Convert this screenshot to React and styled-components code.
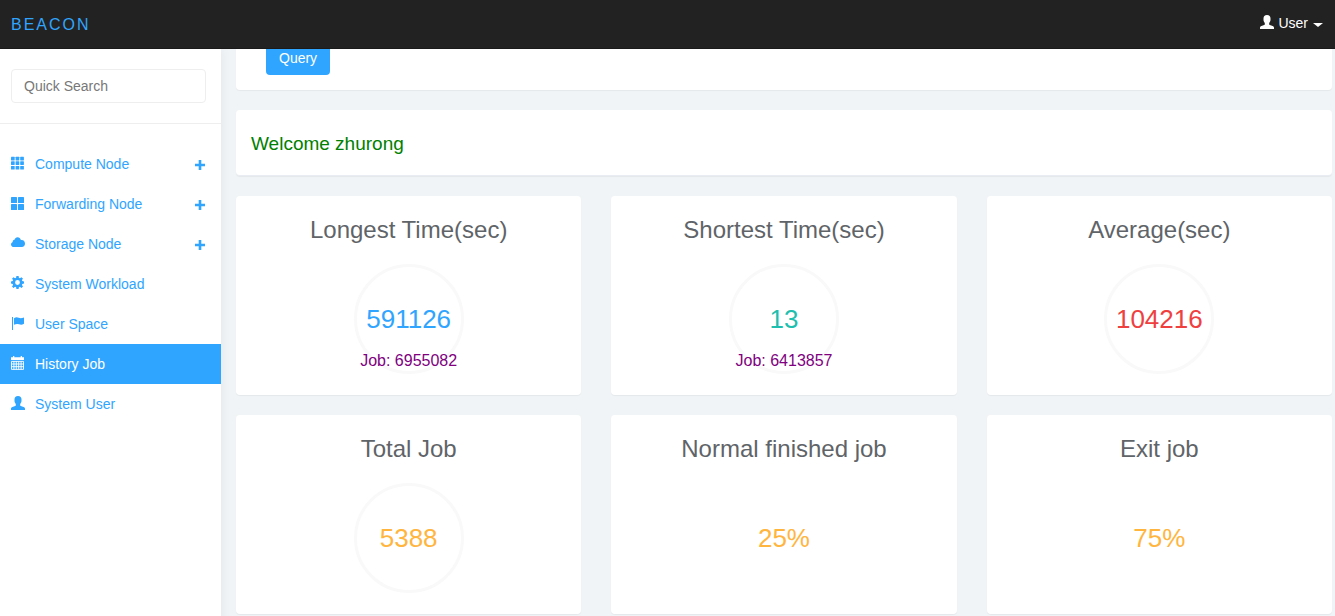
import React from "react";
import styled, { createGlobalStyle, css } from "styled-components";

const blue = "#30a5ff";

const GlobalStyle = createGlobalStyle`
  *, *::before, *::after { box-sizing: border-box; }
  html { overflow: hidden; }
  body {
    margin: 0;
    background: #f1f4f7;
    color: #5f6468;
    font: 14px/20px "Liberation Sans", Helvetica, Arial, sans-serif;
  }
`;

const Navbar = styled.header`
  position: sticky;
  top: 0;
  z-index: 10;
  display: flex;
  align-items: center;
  justify-content: space-between;
  height: 49px;
  padding: 0 12px 0 11px;
  background: #222;
  border-bottom: 1px solid #1a1a1a;
`;

const Brand = styled.a`
  padding-top: 2px;
  color: ${blue};
  font-size: 16px;
  letter-spacing: 2px;
  text-decoration: none;
`;

const UserButton = styled.button`
  display: flex;
  align-items: center;
  gap: 4px;
  padding: 0 0 2px;
  border: 0;
  background: none;
  color: #fff;
  font: inherit;
  font-size: 14px;
`;

const Caret = styled.span`
  margin: 4px 0 0 1px;
  border: 5px solid transparent;
  border-top: 4px solid currentColor;
  border-bottom: 0;
`;

const Layout = styled.div`
  display: flex;
  min-height: calc(100vh - 49px);
`;

const Sidebar = styled.aside`
  flex: 0 0 221px;
  background: #fff;
  box-shadow: 1px 0 10px rgba(0, 0, 0, 0.05);
`;

const SearchForm = styled.form`
  padding: 20px 15px 20px 11px;
  border-bottom: 1px solid #eee;
`;

const SearchInput = styled.input`
  display: block;
  width: 100%;
  height: 34px;
  padding: 6px 12px;
  border: 1px solid #eee;
  border-radius: 4px;
  background: #fff;
  font: inherit;
  font-size: 14px;
  color: #555;
  &::placeholder { color: #777; opacity: 1; }
`;

const Menu = styled.ul`
  margin: 20px 0 0;
  padding: 0;
  list-style: none;
`;

const MenuLink = styled.a`
  display: flex;
  align-items: center;
  gap: 10px;
  height: 40px;
  padding: 0 16px 0 11px;
  color: ${blue};
  font-size: 14px;
  text-decoration: none;
  ${(p) => p.$active && css`
    background: ${blue};
    color: #fff;
  `}
`;

const MenuLabel = styled.span`
  flex: 1;
`;

const Glyph = styled.svg`
  display: block;
  flex: none;
  width: 14px;
  height: 14px;
  margin-bottom: 2px;
  fill: currentColor;
`;

const Main = styled.main`
  flex: 1;
  min-width: 0;
  margin-top: -49px;
  padding: 0 3px 0 15px;
  overflow: hidden;
`;

const Panel = styled.section`
  margin-bottom: 20px;
  border-radius: 4px;
  background: #fff;
  box-shadow: 0 1px 1px rgba(0, 0, 0, 0.05);
`;

const QueryPanel = styled(Panel)`
  padding: 41px 30px 15px;
`;

const WelcomePanel = styled(Panel)`
  padding: 21px 15px 19px;
  border-bottom: 1px solid #e9ecf2;
`;

const QueryButton = styled.button`
  display: block;
  height: 34px;
  padding: 0 13px;
  border: 0;
  border-radius: 4px;
  background: ${blue};
  color: #fff;
  font: inherit;
  font-size: 14px;
`;

const Welcome = styled.h4`
  margin: 0;
  color: green;
  font-size: 19px;
  font-weight: 500;
  line-height: 25px;
`;

const CardGrid = styled.div`
  display: grid;
  grid-template-columns: repeat(3, 1fr);
  column-gap: 30px;
`;

const Card = styled(Panel)`
  display: flex;
  flex-direction: column;
  align-items: center;
  gap: 20px;
  padding: 20px 15px 21px;
`;

const CardTitle = styled.h4`
  margin: 0;
  font-size: 24px;
  font-weight: 400;
  line-height: 28px;
`;

const Ring = styled.div`
  position: relative;
  display: flex;
  align-items: center;
  justify-content: center;
  width: 110px;
  height: 110px;
  border: 3px solid ${(p) => (p.$plain ? "transparent" : "#f9f9f9")};
  border-radius: 50%;
  color: ${(p) => p.$color};
  font-size: 26px;
  line-height: 30px;
`;

const JobNote = styled.span`
  position: absolute;
  bottom: 0;
  left: 50%;
  transform: translateX(-50%);
  color: purple;
  font-size: 16px;
  line-height: 20px;
  white-space: nowrap;
`;

const UserIcon = () => (
  <Glyph viewBox="0 0 14 14" aria-hidden="true">
    <path d="M7 0C9.400 0 10.500 1.300 10.500 3.400V4.800C10.500 6.200 9.900 7.200 9.200 8V9.200C9.200 9.600 9.400 9.900 9.800 10L12.600 11.100C13.500 11.500 14 12 14 12.800V14H0V12.800C0 12 .5 11.500 1.400 11.100L4.200 10C4.600 9.900 4.800 9.600 4.800 9.200V8C4.100 7.200 3.500 6.200 3.500 4.800V3.400C3.500 1.300 4.600 0 7 0Z" />
  </Glyph>
);

const GridIcon = () => (
  <Glyph viewBox="0 0 14 14" aria-hidden="true">
    {[0.8, 5.3, 9.9].map((y) =>
      [0, 4.6, 9.2].map((x) => <rect key={`${x}-${y}`} x={x} y={y} width="3.7" height="3.7" rx=".4" />)
    )}
  </Glyph>
);

const LargeGridIcon = () => (
  <Glyph viewBox="0 0 14 14" aria-hidden="true">
    {[1, 8].map((y) =>
      [0, 7].map((x) => <rect key={`${x}-${y}`} x={x} y={y} width="6" height="6" rx=".5" />)
    )}
  </Glyph>
);

const CloudIcon = () => (
  <Glyph viewBox="0 0 14 14" aria-hidden="true">
    <path d="M3 11C1.2 11 0 9.9 0 8.4 0 7.2.7 6.3 1.7 5.9 1.5 4.5 2.5 3.5 3.5 3.7 4 2.2 5 1.3 6.500 1.300 8.300 1.300 9.500 2.500 9.900 4.100 12.300 3.500 14 5.500 14 7.500 14 9.600 12.700 11 10.800 11Z" />
  </Glyph>
);

const CogIcon = () => (
  <Glyph viewBox="0 0 14 14" aria-hidden="true">
    <path
      fillRule="evenodd"
      d="M5.4 0h2.200l.3 1.800 1 .4L10.500 1.200 12 2.700 10.900 4.100l.4 1L13 5.400v2.200l-1.700.3-.4 1 1.100 1.500-1.500 1.500-1.600-1.100-1 .4L7.600 13H5.400l-.3-1.800-1-.4-1.600 1.100L1 10.400l1.100-1.500-.4-1L0 7.600V5.400l1.700-.3.4-1L1 2.700 2.500 1.200l1.600 1 1-.4ZM6.500 4.100a2.400 2.400 0 1 0 0 4.800 2.400 2.400 0 0 0 0-4.800Z"
    />
  </Glyph>
);

const FlagIcon = () => (
  <Glyph viewBox="0 0 14 14" aria-hidden="true">
    <path d="M1 1h1V14H1ZM3 2.200C5 1 6.300 1.300 7.700 1.800 9.300 2.400 10.600 2.300 13 1.500V7.800C11 9 9.600 8.800 8 8.300 6.300 7.800 5 7.800 3 8.800Z" />
  </Glyph>
);

const CalendarIcon = () => (
  <Glyph viewBox="0 0 14 14" aria-hidden="true">
    <path d="M0 1.300h2V0h1.300v1.300h6.400V0H11v1.300h2V4H0Z" />
    <path
      d="M.5 5.400h12v8H.5ZM2.900 5.400v8M5.300 5.400v8M7.700 5.400v8M10.100 5.400v8M.5 8h12M.5 10.700h12"
      fill="none"
      stroke="currentColor"
      strokeWidth=".9"
    />
  </Glyph>
);

const PlusGlyph = styled(Glyph)`
  width: 10px;
  height: 10px;
  margin: 2px 0 0;
`;

const PlusIcon = () => (
  <PlusGlyph viewBox="0 0 10 10" aria-hidden="true">
    <path d="M3.700 0h2.600v3.700H10v2.600H6.300V10H3.700V6.300H0V3.700h3.700Z" />
  </PlusGlyph>
);

const menu = [
  { label: "Compute Node", Icon: GridIcon, expandable: true },
  { label: "Forwarding Node", Icon: LargeGridIcon, expandable: true },
  { label: "Storage Node", Icon: CloudIcon, expandable: true },
  { label: "System Workload", Icon: CogIcon },
  { label: "User Space", Icon: FlagIcon },
  { label: "History Job", Icon: CalendarIcon, active: true },
  { label: "System User", Icon: UserIcon },
];

const cards = [
  { title: "Longest Time(sec)", value: "591126", color: blue, job: "6955082" },
  { title: "Shortest Time(sec)", value: "13", color: "#1ebfae", job: "6413857" },
  { title: "Average(sec)", value: "104216", color: "#ef4040" },
  { title: "Total Job", value: "5388", color: "#ffb53e" },
  { title: "Normal finished job", value: "25%", color: "#ffb53e", plain: true },
  { title: "Exit job", value: "75%", color: "#ffb53e", plain: true },
];

export default function App() {
  return (
    <>
      <GlobalStyle />
      <Navbar>
        <Brand href="#">BEACON</Brand>
        <UserButton type="button">
          <UserIcon />
          User
          <Caret />
        </UserButton>
      </Navbar>
      <Layout>
        <Sidebar>
          <SearchForm role="search">
            <SearchInput type="text" placeholder="Quick Search" aria-label="Quick Search" />
          </SearchForm>
          <Menu>
            {menu.map(({ label, Icon, expandable, active }) => (
              <li key={label}>
                <MenuLink href="#" $active={active}>
                  <Icon />
                  <MenuLabel>{label}</MenuLabel>
                  {expandable && <PlusIcon />}
                </MenuLink>
              </li>
            ))}
          </Menu>
        </Sidebar>
        <Main>
          <QueryPanel>
            <QueryButton type="button">Query</QueryButton>
          </QueryPanel>
          <WelcomePanel>
            <Welcome>Welcome zhurong</Welcome>
          </WelcomePanel>
          <CardGrid>
            {cards.map(({ title, value, color, job, plain }) => (
              <Card key={title}>
                <CardTitle>{title}</CardTitle>
                <Ring $color={color} $plain={plain}>
                  {value}
                  {job && <JobNote>Job: {job}</JobNote>}
                </Ring>
              </Card>
            ))}
          </CardGrid>
        </Main>
      </Layout>
    </>
  );
}
